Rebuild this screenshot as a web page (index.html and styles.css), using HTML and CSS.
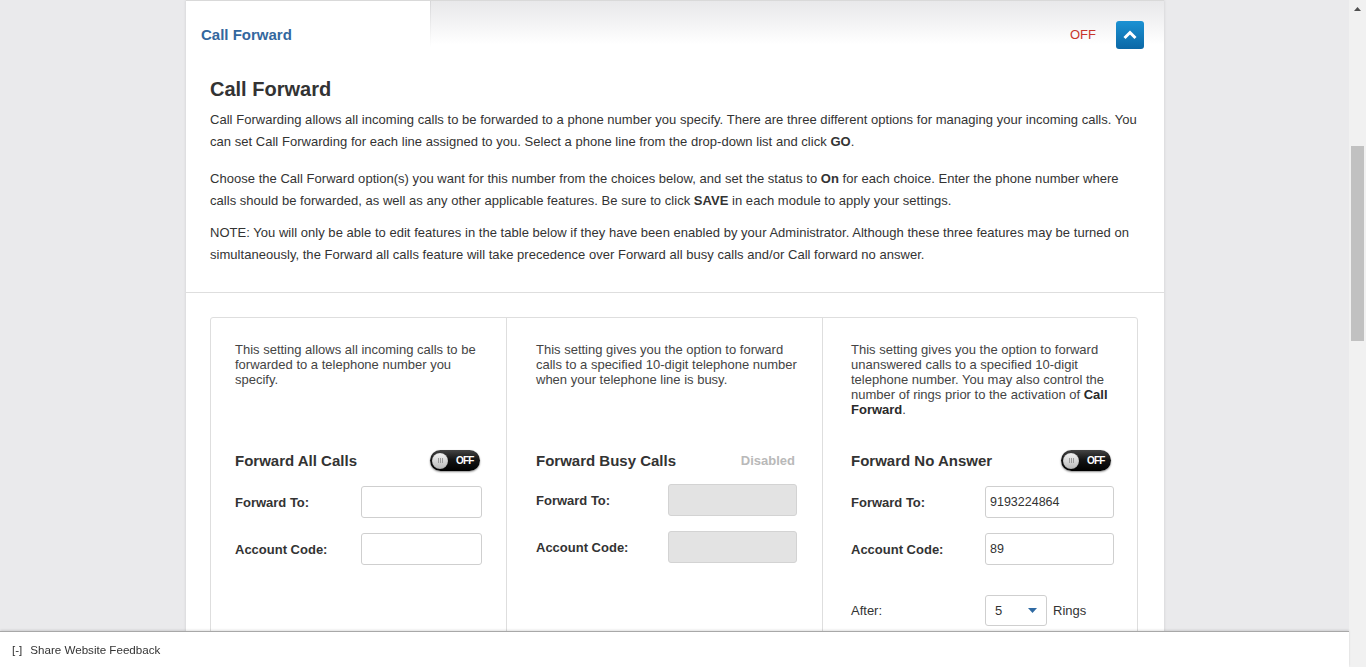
FILE: index.html
```html
<!DOCTYPE html>
<html lang="en">
<head>
<meta charset="utf-8">
<title>Call Forward</title>
<link rel="stylesheet" href="styles.css">
</head>
<body>
<div class="page">
  <main class="viewport">
    <section class="panel">
      <header class="panel-head">
        <div class="panel-tab">Call Forward</div>
        <div class="panel-bar">
          <span class="status-off">OFF</span>
          <button class="collapse-btn" type="button" aria-label="Collapse">
            <svg width="28" height="28" viewBox="0 0 28 28"><path d="M8.5 17 L14 11.5 L19.5 17" fill="none" stroke="#fff" stroke-width="3"/></svg>
          </button>
        </div>
      </header>

      <div class="intro">
        <h1 class="intro-title">Call Forward</h1>
        <p class="intro-text intro-text--first">Call Forwarding allows all incoming calls to be forwarded to a phone number you specify. There are three different options for managing your incoming calls. You can set Call Forwarding for each line assigned to you. Select a phone line from the drop-down list and click <b>GO</b>.</p>
        <p class="intro-text intro-text--second">Choose the Call Forward option(s) you want for this number from the choices below, and set the status to <b>On</b> for each choice. Enter the phone number where calls should be forwarded, as well as any other applicable features. Be sure to click <b>SAVE</b> in each module to apply your settings.</p>
        <p class="intro-text">NOTE: You will only be able to edit features in the table below if they have been enabled by your Administrator. Although these three features may be turned on simultaneously, the Forward all calls feature will take precedence over Forward all busy calls and/or Call forward no answer.</p>
      </div>

      <div class="features">
        <div class="feature-grid">
          <div class="feature feature--all">
            <p class="feature-desc">This setting allows all incoming calls to be forwarded to a telephone number you specify.</p>
            <div class="feature-head">
              <h2 class="feature-title">Forward All Calls</h2>
              <span class="toggle"><span class="toggle-knob"></span><span class="toggle-label">OFF</span></span>
            </div>
            <div class="field field--narrow"><label class="field-label">Forward To:</label><input class="field-input" type="text"></div>
            <div class="field field--narrow"><label class="field-label">Account Code:</label><input class="field-input" type="text"></div>
          </div>

          <div class="feature feature--busy">
            <p class="feature-desc">This setting gives you the option to forward calls to a specified 10-digit telephone number when your telephone line is busy.</p>
            <div class="feature-head feature-head--static">
              <h2 class="feature-title">Forward Busy Calls</h2>
              <span class="status-disabled">Disabled</span>
            </div>
            <div class="field"><label class="field-label">Forward To:</label><input class="field-input field-input--disabled" type="text" disabled></div>
            <div class="field"><label class="field-label">Account Code:</label><input class="field-input field-input--disabled" type="text" disabled></div>
          </div>

          <div class="feature feature--noanswer">
            <p class="feature-desc">This setting gives you the option to forward unanswered calls to a specified 10-digit telephone number. You may also control the number of rings prior to the activation of <b>Call Forward</b>.</p>
            <div class="feature-head">
              <h2 class="feature-title">Forward No Answer</h2>
              <span class="toggle"><span class="toggle-knob"></span><span class="toggle-label">OFF</span></span>
            </div>
            <div class="field"><label class="field-label">Forward To:</label><input class="field-input" type="text" value="9193224864"></div>
            <div class="field"><label class="field-label">Account Code:</label><input class="field-input" type="text" value="89"></div>
            <div class="field field--after">
              <span class="field-label field-label--plain">After:</span>
              <div class="rings">
                <div class="select"><span class="select-value">5</span><svg class="select-caret" width="9" height="5" viewBox="0 0 9 5"><path d="M0 0 H9 L4.5 5 Z" fill="#2f6aa3"/></svg></div>
                <span class="rings-label">Rings</span>
              </div>
            </div>
          </div>
        </div>
      </div>
    </section>
  </main>
  <div class="scrollbar">
    <svg class="scrollbar-arrow" width="7" height="4" viewBox="0 0 7 4"><path d="M3.5 0 L7 4 H0 Z" fill="#505050"/></svg>
    <div class="scrollbar-thumb"></div>
  </div>
</div>

<footer class="feedback">
  <span class="feedback-toggle">[-]</span>
  <span class="feedback-link">Share Website Feedback</span>
</footer>
</body>
</html>
```

FILE: styles.css
```css
* { box-sizing: border-box; }

html, body {
  margin: 0;
  height: 100%;
}

body {
  background: #eaeaec;
  font-family: "Liberation Sans", Arial, sans-serif;
  color: #333;
  overflow: hidden;
}

.page {
  display: flex;
  height: 100vh;
}

.viewport {
  flex: 1;
  min-width: 0;
  overflow: hidden;
}

.panel {
  width: 978px;
  margin-left: 186px;
  background: #fff;
  border-top: 1px solid #d9d9d9;
  box-shadow: 0 0 3px rgba(0, 0, 0, 0.12);
}

/* header */
.panel-head {
  display: flex;
  height: 68px;
}

.panel-tab {
  width: 244px;
  display: flex;
  align-items: center;
  padding-left: 15px;
  padding-bottom: 2px;
  font-size: 15px;
  font-weight: bold;
  color: #33679e;
  background: #fff;
}

.panel-bar {
  flex: 1;
  display: flex;
  align-items: center;
  justify-content: flex-end;
  gap: 20px;
  padding-right: 20px;
  background: linear-gradient(to bottom, #e8e8ea 0, #fff 44px);
  border-left: 1px solid;
  border-image: linear-gradient(to bottom, #d6d6d8 0, #fff 46px) 1;
}

.status-off {
  font-size: 13px;
  color: #c8352b;
  margin-bottom: 2px;
}

.collapse-btn {
  width: 28px;
  height: 28px;
  padding: 0;
  border: 0;
  border-radius: 3px;
  background: linear-gradient(to bottom, #1b92d3, #0b68a6);
  display: flex;
  align-items: center;
  justify-content: center;
}

.collapse-btn svg { display: block; }

/* intro */
.intro {
  padding: 8px 24px 26px 24px;
}

.intro-title {
  margin: 0 0 8px 0;
  font-size: 20px;
  line-height: 24px;
  font-weight: bold;
  color: #333;
}

.intro-text {
  margin: 0;
  font-size: 13px;
  line-height: 22px;
  letter-spacing: 0.03px;
  color: #333;
}

.intro-text--first { margin-bottom: 15px; }
.intro-text--second { margin-bottom: 10px; }

/* features */
.features {
  border-top: 1px solid #dedede;
  padding: 24px 26px 0 24px;
}

.feature-grid {
  display: grid;
  grid-template-columns: 296px 316px 1fr;
  border: 1px solid #dedede;
  border-radius: 3px;
}

.feature {
  padding: 24px 23px 24px 28px;
}

.feature--all {
  padding-left: 24px;
  padding-right: 24px;
  border-right: 1px solid #dedede;
}

.feature--busy {
  padding-left: 29px;
  padding-right: 25px;
  border-right: 1px solid #dedede;
}

.feature-desc {
  margin: 0;
  min-height: 108px;
  font-size: 13px;
  line-height: 15px;
  color: #444;
}

.feature-desc b { color: #2a2a2a; }

.feature-head {
  display: flex;
  align-items: center;
  justify-content: space-between;
  min-height: 21px;
}

.feature-head--static {
  min-height: 0;
  padding-top: 2px;
}

.feature-title {
  margin: 0;
  font-size: 15px;
  line-height: 17px;
  font-weight: bold;
  color: #333;
}

.status-disabled {
  font-size: 13px;
  font-weight: bold;
  color: #b9b9b9;
  margin-right: 2px;
}

.toggle {
  width: 50px;
  height: 21px;
  margin-right: 2px;
  border-radius: 11px;
  background: linear-gradient(to bottom, #444 0, #151515 45%, #000 100%);
  box-shadow: 0 1px 2px rgba(0, 0, 0, 0.45);
  display: flex;
  align-items: center;
  padding-left: 2px;
}

.feature--noanswer .toggle { margin-right: 3px; }

.toggle-knob {
  width: 16px;
  height: 16px;
  border-radius: 50%;
  background: linear-gradient(to bottom, #f4f4f4, #b9b9b9);
  box-shadow: inset 0 0 1px rgba(0, 0, 0, 0.4);
  display: flex;
  align-items: center;
  justify-content: center;
}

.toggle-knob::before {
  content: "";
  width: 5px;
  height: 5px;
  background: repeating-linear-gradient(90deg, #9a9a9a 0 1px, transparent 1px 2px);
}

.toggle-label {
  margin-left: 8px;
  font-size: 10px;
  font-weight: bold;
  letter-spacing: -0.8px;
  color: #fff;
}

.field {
  display: grid;
  grid-template-columns: 1fr 129px;
  align-items: center;
  margin-top: 15px;
}

.field--narrow { grid-template-columns: 1fr 121px; }

.field--after { margin-top: 30px; }

.field-label {
  font-size: 13px;
  font-weight: bold;
  color: #333;
}

.field-label--plain { font-weight: normal; }

.field-input {
  width: 100%;
  height: 32px;
  margin: 0;
  padding: 0 4px;
  border: 1px solid #cfcfcf;
  border-radius: 3px;
  background: #fff;
  font-family: "Liberation Sans", Arial, sans-serif;
  font-size: 12.5px;
  color: #333;
  outline: none;
}

.field-input--disabled {
  background: #e3e3e3;
  border-color: #d3d3d3;
}

.rings {
  display: flex;
  align-items: center;
  gap: 6px;
}

.select {
  width: 62px;
  height: 31px;
  border: 1px solid #cfcfcf;
  border-radius: 3px;
  display: flex;
  align-items: center;
  justify-content: space-between;
  padding: 0 9px 0 9px;
  font-size: 13px;
  color: #333;
}

.select-caret { display: block; }

.rings-label {
  font-size: 13px;
  color: #333;
}

/* scrollbar */
.scrollbar {
  width: 17px;
  flex: 0 0 17px;
  background: #f1f1f1;
  display: flex;
  flex-direction: column;
  align-items: center;
}

.scrollbar-arrow {
  display: block;
  margin-top: 7px;
}

.scrollbar-thumb {
  width: 13px;
  height: 195px;
  margin-top: 135px;
  background: #c1c1c1;
}

/* footer */
.feedback {
  position: fixed;
  left: 0;
  right: 17px;
  bottom: 0;
  height: 36px;
  background: #fff;
  border-top: 1px solid #a8a8a8;
  box-shadow: 0 -1px 2px rgba(0, 0, 0, 0.12);
  display: flex;
  align-items: center;
  gap: 8px;
  padding-left: 12px;
  font-size: 11.6px;
  color: #333;
}
```
